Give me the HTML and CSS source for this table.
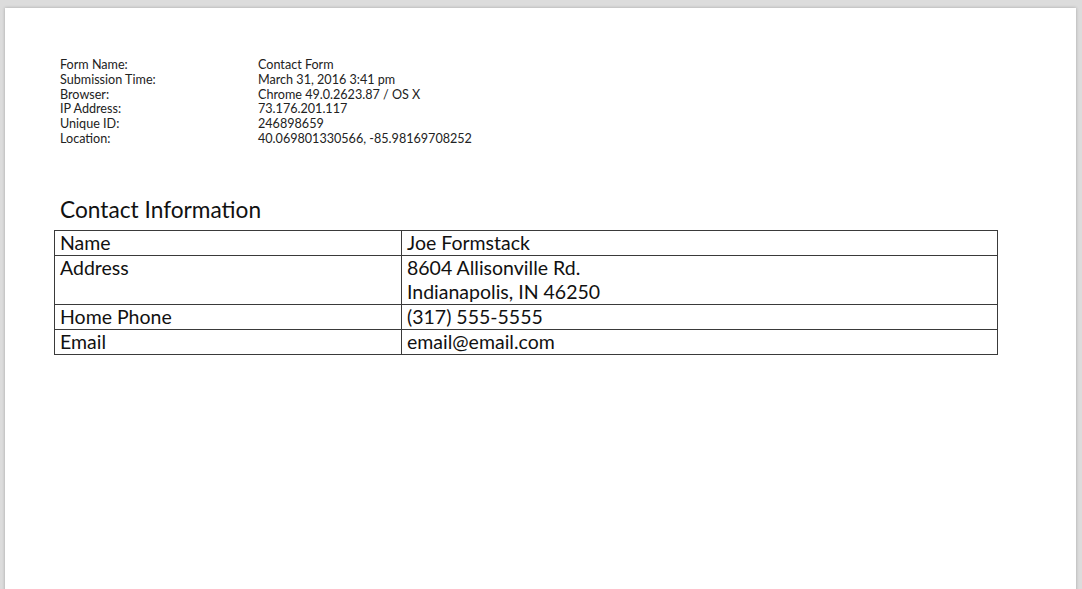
FILE: index.html
```html
<!DOCTYPE html>
<html>
<head>
<meta charset="utf-8">
<link rel="stylesheet" href="styles.css">
</head>
<body>
<div class="page">
  <div class="meta">
    <span>Form Name:</span><span>Contact Form</span>
    <span>Submission Time:</span><span>March 31, 2016 3:41 pm</span>
    <span>Browser:</span><span>Chrome 49.0.2623.87 / OS X</span>
    <span>IP Address:</span><span>73.176.201.117</span>
    <span>Unique ID:</span><span>246898659</span>
    <span>Location:</span><span>40.069801330566, -85.98169708252</span>
  </div>
  <h2 class="section-title">Contact Information</h2>
  <table class="info">
    <tr><td class="label">Name</td><td>Joe Formstack</td></tr>
    <tr><td class="label">Address</td><td>8604 Allisonville Rd.<br>Indianapolis, IN 46250</td></tr>
    <tr><td class="label">Home Phone</td><td>(317) 555-5555</td></tr>
    <tr><td class="label">Email</td><td>email@email.com</td></tr>
  </table>
</div>
</body>
</html>
```
FILE: styles.css
```css
html, body {
  margin: 0;
  padding: 0;
  height: 100%;
  overflow: hidden;
}
body {
  background: #dcdcdc;
  font-family: "Lato", "Liberation Sans", sans-serif;
  color: #111;
}
.page {
  margin: 8px 6px 0 5px;
  height: 600px;
  background: #fff;
  box-shadow: 0 0 3px rgba(0,0,0,0.25);
  padding: 50px 0 0 49px;
  box-sizing: border-box;
}
.meta {
  display: grid;
  grid-template-columns: 198px auto;
  font-size: 12.6px;
  line-height: 14.8px;
  margin-left: 6px;
  color: #222;
}
.section-title {
  font-size: 22.7px;
  font-weight: normal;
  margin: 48px 0 0 6px;
  line-height: 30px;
}
.info {
  border-collapse: collapse;
  width: 944px;
  font-size: 19.5px;
  margin-top: 5px;
}
.info td {
  border: 1px solid #3a3a3a;
  padding: 0 5px;
  line-height: 24px;
  vertical-align: top;
}
.info td.label {
  width: 336px;
}
```
